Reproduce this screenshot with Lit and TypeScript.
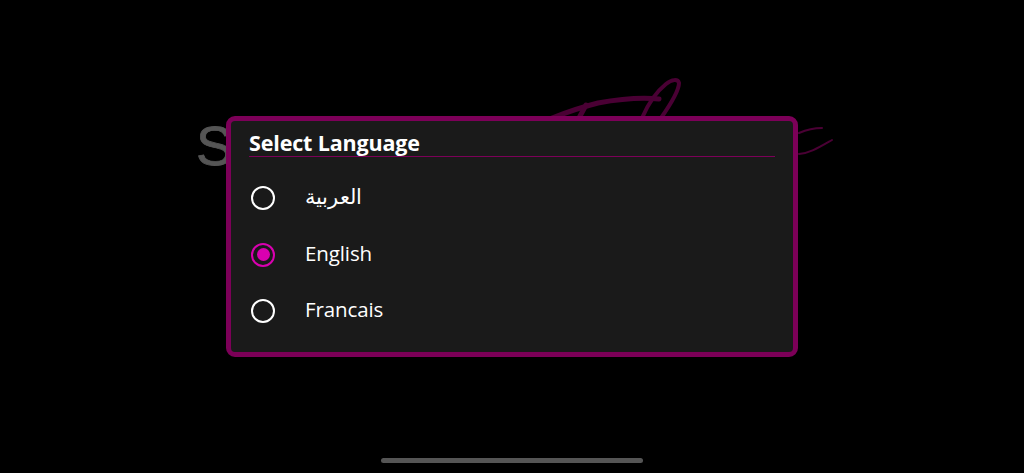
import { LitElement, html, css, svg } from "lit";
import { customElement, state } from "lit/decorators.js";

const LANGS = [
  { id: "ar", label: "العربية" },
  { id: "en", label: "English" },
  { id: "fr", label: "Francais" },
];

@customElement("app-root")
export class AppRoot extends LitElement {
  @state() selected = "en";

  static styles = css`
    :host {
      display: block;
      width: 1024px;
      height: 473px;
      background: #000;
      overflow: hidden;
      position: relative;
      font-family: "Open Sans", "DejaVu Sans", sans-serif;
      color: #fff;
    }
    .page {
      height: 100%;
      box-sizing: border-box;
      padding-top: 116px;
      display: flex;
      flex-direction: column;
      align-items: center;
    }
    .logo-s {
      position: absolute;
      left: 196px;
      top: 106px;
      font-family: "Liberation Sans", sans-serif;
      font-size: 56px;
      line-height: 80px;
      color: #555;
      -webkit-text-stroke: 0.8px #555;
    }
    .logo-sig {
      position: absolute;
      left: 520px;
      top: 70px;
      width: 340px;
      height: 110px;
    }
    .dialog {
      position: relative;
      box-sizing: border-box;
      width: 572px;
      height: 241px;
      background: #1a1a1a;
      border: 5px solid #7c0058;
      border-radius: 9px;
      padding: 8px 18px 0;
    }
    .title {
      font-size: 21.5px;
      font-weight: 700;
      line-height: 27px;
      height: 27px;
      letter-spacing: -0.15px;
      border-bottom: 1px solid #7c0058;
    }
    .list {
      display: flex;
      flex-direction: column;
      margin-top: 13px;
    }
    .row {
      display: flex;
      align-items: center;
      height: 56.5px;
      gap: 30px;
      padding-left: 2px;
      font-size: 20.5px;
      cursor: pointer;
    }
    .label {
      position: relative;
      top: -2px;
      letter-spacing: -0.1px;
    }
    .label.ar {
      font-size: 21px;
      font-weight: 300;
      letter-spacing: 0;
    }
    .radio {
      box-sizing: border-box;
      width: 24px;
      height: 24px;
      border: 2.5px solid #fff;
      border-radius: 50%;
      display: flex;
      align-items: center;
      justify-content: center;
      flex: none;
    }
    .radio.on {
      border-color: #d900b0;
    }
    .radio.on::after {
      content: "";
      width: 13px;
      height: 13px;
      border-radius: 50%;
      background: #d900b0;
    }
    .home {
      position: absolute;
      left: 381px;
      top: 458px;
      width: 262px;
      height: 5px;
      border-radius: 3px;
      background: #555;
    }
  `;

  render() {
    return html`
      <div class="logo-s">S</div>
      <svg class="logo-sig" viewBox="0 0 340 110" fill="none" stroke="#4a0034" stroke-linecap="round">
        ${svg`
          <path d="M32 48C50 41 62 37 78 33C100 29 118 27 139 29" stroke-width="5"/>
          <path d="M66 35L59 48" stroke-width="5"/>
          <path d="M122 48C128 34 136 22 146 14C152 9 158 9 159 13C159 22 148 38 141 48" stroke-width="4"/>
          <path d="M279 63C286 60 293 58 302 58" stroke-width="2"/>
          <path d="M279 84C290 83 298 78 312 70" stroke-width="2"/>
        `}
      </svg>
      <div class="page">
        <div class="dialog">
          <div class="title">Select Language</div>
          <div class="list">
            ${LANGS.map(
              (l) => html`
                <div class="row" @click=${() => (this.selected = l.id)}>
                  <span class="radio ${this.selected === l.id ? "on" : ""}"></span>
                  <span class="label ${l.id === "ar" ? "ar" : ""}">${l.label}</span>
                </div>
              `
            )}
          </div>
        </div>
      </div>
      <div class="home"></div>
    `;
  }
}
